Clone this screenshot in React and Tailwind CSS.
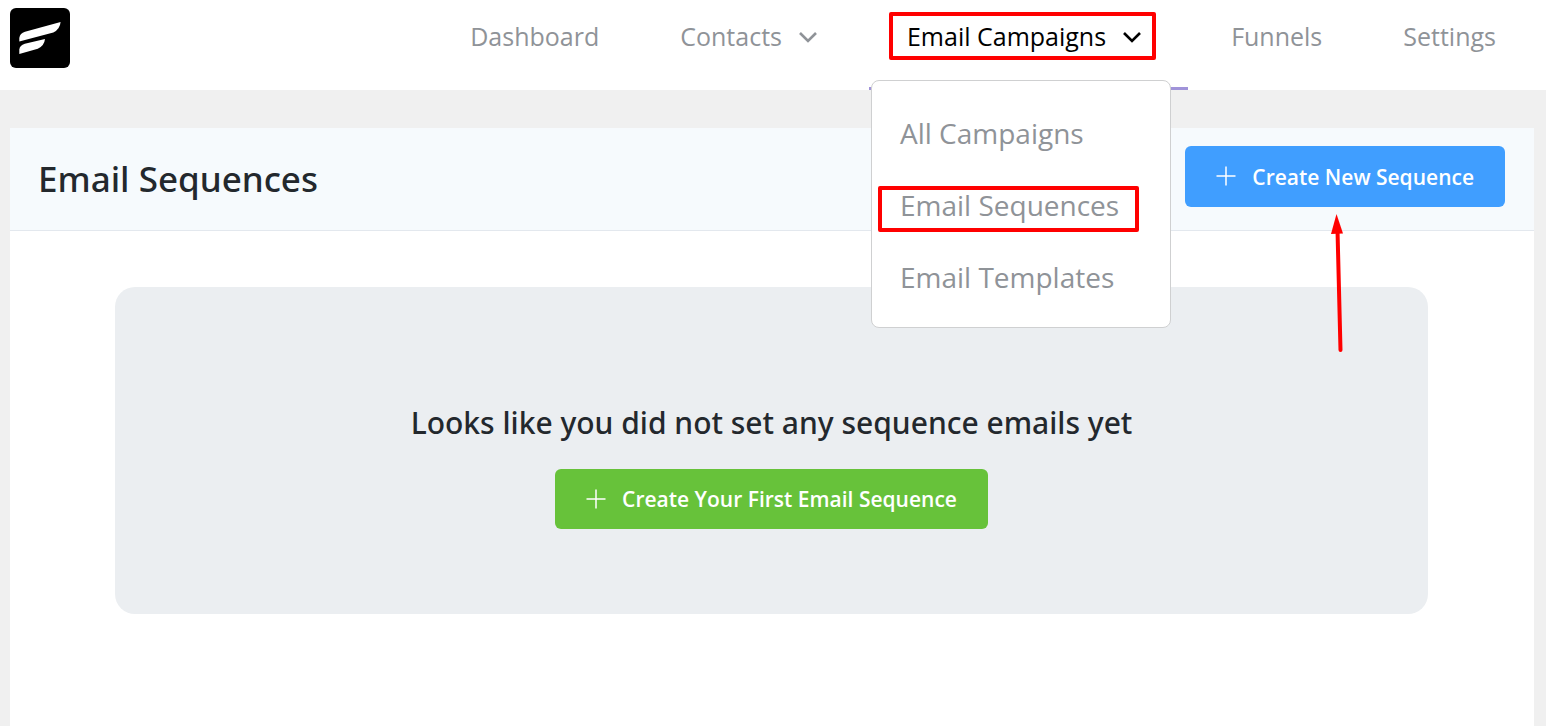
import React from "react";

function Logo() {
  return (
    <a href="#home" aria-label="Home" className="block shrink-0">
      <svg viewBox="0 0 60 60" className="size-[60px]" aria-hidden="true">
        <rect width="60" height="60" rx="6" fill="#000" />
        <path d="M9.300 33.600V30Q10 25.400 15 23.800L50.600 14Q50 21.300 43.300 24.500Z" fill="#fff" />
        <path d="M9.300 46V41.500Q9.800 37.400 14.800 35.800L35 31Q34.400 37.500 27.800 40.800Z" fill="#fff" />
      </svg>
    </a>
  );
}

function Chevron() {
  return (
    <svg viewBox="0 0 36 24" className="h-6 w-9 shrink-0" aria-hidden="true" fill="none" stroke="currentColor" strokeWidth="2.600">
      <path d="M10 9L18 17L26 9" />
    </svg>
  );
}

function Plus() {
  return (
    <svg viewBox="0 0 20 20" className="size-5 shrink-0" aria-hidden="true" fill="none" stroke="currentColor" strokeWidth="1.500">
      <path d="M10 0.500V19.500M0.500 10H19.500" />
    </svg>
  );
}

const campaigns = ["All Campaigns", "Email Sequences", "Email Templates"];

function CampaignMenu() {
  return (
    <ul className="absolute top-20 left-[2px] z-10 w-[300px] rounded-lg border border-[#cfd0d1] bg-white pt-4 pb-[14px]">
      {campaigns.map((name) => (
        <li key={name} className="relative flex h-[72px] items-center">
          <a href="#campaigns" className="block w-full px-7 text-[28px] leading-[40px] text-[#8f9398]">
            {name}
          </a>
          {name === "Email Sequences" && (
            <span className="pointer-events-none absolute top-[17px] left-[6px] h-[46px] w-[261px] rounded-xs border-4 border-[#ff0000]" />
          )}
        </li>
      ))}
    </ul>
  );
}

export default function App() {
  return (
    <div className="flex min-h-screen flex-col bg-[#f0f0f0] font-['Open_Sans','Noto_Sans',sans-serif] text-[#23282d]">
      <header className="flex h-[90px] items-start justify-between bg-white pr-3 pl-[10px]">
        <div className="pt-2">
          <Logo />
        </div>
        <nav aria-label="Main">
          <ul className="flex h-[90px] gap-[5px] text-[25px] leading-[34px] text-[#8f9398]">
            <li className="px-[38px] pt-[19px]">
              <a href="#dashboard">Dashboard</a>
            </li>
            <li className="px-[38px] pt-[19px]">
              <button type="button" className="flex items-center gap-2">
                Contacts
                <Chevron />
              </button>
            </li>
            <li className="relative border-b-3 border-[#a093d9] px-[38px] pt-[19px] text-black">
              <button type="button" className="flex items-center gap-2" aria-expanded="true">
                Email Campaigns
                <Chevron />
              </button>
              <span className="pointer-events-none absolute top-3 right-8 left-5 h-12 rounded-xs border-4 border-[#ff0000]" />
              <CampaignMenu />
            </li>
            <li className="px-[38px] pt-[19px]">
              <a href="#funnels">Funnels</a>
            </li>
            <li className="px-[38px] pt-[19px]">
              <a href="#settings">Settings</a>
            </li>
          </ul>
        </nav>
      </header>

      <main className="mt-[38px] mr-3 ml-[10px] flex-1 bg-white">
        <div className="flex h-[103px] items-center justify-between border-b border-[#e3e8ee] bg-[#f6fafd] pr-[29px] pl-7">
          <h1 className="font-['Noto_Sans','Open_Sans',sans-serif] text-[35px] leading-[48px] font-medium">Email Sequences</h1>
          <div className="relative mb-[6px]">
            <button type="button" className="flex h-[61px] items-center gap-4 rounded-md bg-[#409eff] px-[31px] text-[21px] font-semibold text-white">
              <Plus />
              <span className="pt-[3px]">Create New Sequence</span>
            </button>
            <svg viewBox="0 0 16 142" className="pointer-events-none absolute top-[66px] left-[145px] h-[142px] w-4" aria-hidden="true">
              <path d="M7.500 18L10.500 138" stroke="#ff0000" strokeWidth="4" strokeLinecap="round" />
              <path d="M6.500 2L13 21.500L1 22Z" fill="#ff0000" />
            </svg>
          </div>
        </div>

        <section className="mt-14 mr-[106px] ml-[105px] flex h-[327px] flex-col items-center justify-center gap-6 rounded-[20px] bg-[#ebeef1] pt-7">
          <h2 className="font-['Noto_Sans','Open_Sans',sans-serif] text-[30px] leading-[44px] font-medium">
            Looks like you did not set any sequence emails yet
          </h2>
          <button type="button" className="flex h-[60px] items-center gap-4 rounded-md bg-[#67c23a] px-[31px] text-[21px] font-semibold text-white">
            <Plus />
            <span className="pt-[3px]">Create Your First Email Sequence</span>
          </button>
        </section>
      </main>
    </div>
  );
}
